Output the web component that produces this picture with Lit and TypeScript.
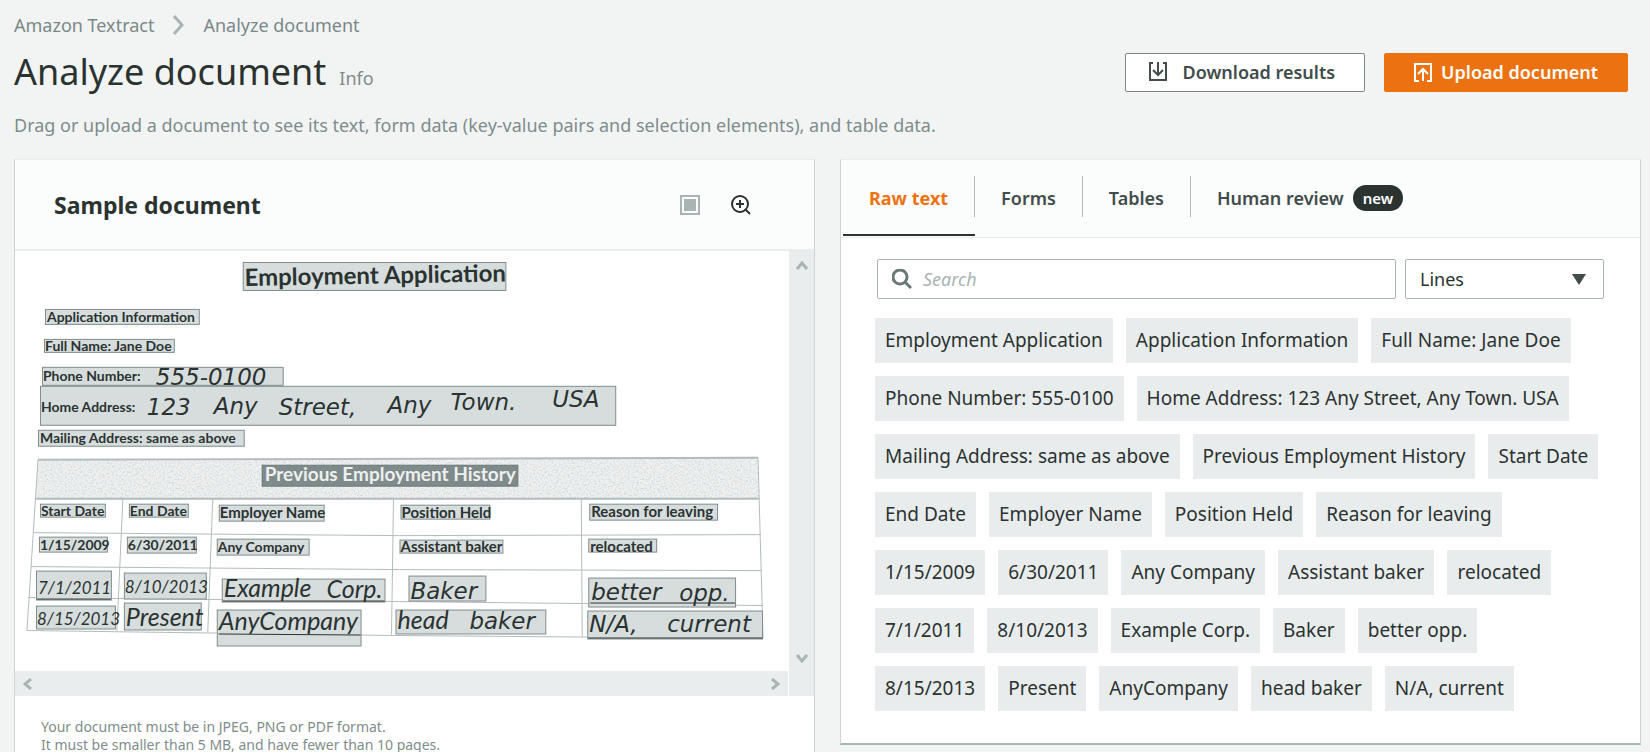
import { LitElement, html, svg, css } from "lit";
import { customElement, property, state } from "lit/decorators.js";
import { classMap } from "lit/directives/class-map.js";

type Word = { x: number; y: number; t: string; k: string; r?: number };
type Box = { x: number; y: number; w: number; h: number; dark?: boolean; words: Word[] };

const LINES = [
  ["Employment Application", "Application Information", "Full Name: Jane Doe"],
  ["Phone Number: 555-0100", "Home Address: 123 Any Street, Any Town. USA"],
  ["Mailing Address: same as above", "Previous Employment History", "Start Date"],
  ["End Date", "Employer Name", "Position Held", "Reason for leaving"],
  ["1/15/2009", "6/30/2011", "Any Company", "Assistant baker", "relocated"],
  ["7/1/2011", "8/10/2013", "Example Corp.", "Baker", "better opp."],
  ["8/15/2013", "Present", "AnyCompany", "head baker", "N/A, current"],
];

const box = (x: number, y: number, right: number, bottom: number, words: Word[], dark = false): Box =>
  ({ x, y, w: right - x, h: bottom - y, words, dark });
const word = (x: number, y: number, t: string, k: string, r = 0): Word => ({ x, y, t, k, r });

const BOXES: Box[] = [
  box(243, 261, 507, 290, [word(245, 285, "Employment Application", "heading", -1)]),
  box(45, 308, 200, 324, [word(47, 321, "Application Information", "label")]),
  box(44, 338, 175, 352, [word(45, 350, "Full Name: Jane Doe", "label")]),
  box(42, 366, 284, 385, [word(43, 380, "Phone Number:", "label"), word(156, 384, "555-0100", "hand wide")]),
  box(40, 385, 617, 425, [
    word(41, 411, "Home Address:", "label"), word(147, 414, "123", "hand wide"), word(214, 413, "Any", "hand wide"),
    word(279, 414, "Street,", "hand wide"), word(388, 412, "Any", "hand wide"), word(451, 409, "Town.", "hand wide"),
    word(553, 406, "USA", "hand wide"),
  ]),
  box(38, 429, 245, 446, [word(40, 442, "Mailing Address: same as above", "label")]),
  box(262, 464, 519, 486, [word(265, 480, "Previous Employment History", "banner")], true),
  box(40, 503, 106, 517, [word(41, 515, "Start Date", "cell")]),
  box(129, 503, 189, 517, [word(130, 515, "End Date", "cell")]),
  box(219, 504, 325, 521, [word(220, 517, "Employer Name", "cell large")]),
  box(401, 504, 491, 519, [word(402, 517, "Position Held", "cell large")]),
  box(590, 503, 719, 520, [word(592, 516, "Reason for leaving", "cell large")]),
  box(39, 536, 108, 552, [word(40, 549, "1/15/2009", "cell")]),
  box(127, 536, 197, 553, [word(128, 549, "6/30/2011", "cell")]),
  box(217, 538, 310, 555, [word(218, 551, "Any Company", "cell")]),
  box(400, 539, 504, 553, [word(401, 551, "Assistant baker", "cell large")]),
  box(589, 538, 658, 552, [word(591, 551, "relocated", "cell large")]),
  box(36, 570, 112, 600, [word(38, 593, "7/1/2011", "date")]),
  box(124, 572, 207, 599, [word(125, 592, "8/10/2013", "date")]),
  box(222, 578, 386, 602, [word(224, 596, "Example", "hand"), word(327, 597, "Corp.", "hand")]),
  box(409, 575, 487, 601, [word(411, 598, "Baker", "hand wide")]),
  box(589, 577, 737, 607, [word(592, 599, "better", "hand wide"), word(680, 600, "opp.", "hand wide")]),
  box(36, 605, 116, 629, [word(37, 624, "8/15/2013", "date")]),
  box(124, 602, 202, 630, [word(126, 626, "Present", "hand")]),
  box(217, 609, 362, 646, [word(219, 630, "AnyCompany", "hand")]),
  box(396, 609, 547, 634, [word(398, 629, "head", "hand"), word(470, 629, "baker", "hand wide")]),
  box(588, 610, 764, 639, [word(590, 632, "N/A,", "hand wide"), word(668, 632, "current", "hand wide")]),
];

@customElement("scanned-form")
class ScannedForm extends LitElement {
  static styles = css`
    :host { display: block; background: #fff; }
    .sheet { display: block; width: 100%; height: auto; }
    text { fill: #2b3331; font-family: Lato, "Noto Sans", sans-serif; font-weight: 700; }
    .heading { font-size: 24px; }
    .label { font-size: 14px; }
    .cell { font-size: 14px; }
    .cell.large { font-size: 15px; }
    .banner { font-size: 19px; fill: #eef0f0; }
    .hand, .date { font-weight: 400; font-style: italic; font-size: 25px; }
    .hand.wide { font-family: "DejaVu Sans", sans-serif; font-size: 23px; }
    .date { font-size: 17px; }
    .mark { fill: #d7dddd; stroke: #7f8c8d; stroke-width: 1; }
    .mark.dark { fill: #7f8a8a; stroke: #6c7878; }
    .rule { fill: none; stroke: #b3bcbc; stroke-width: 1; }
    .edge { fill: none; stroke: #b3bcbc; stroke-width: 2; }
    .band { fill: #f0f2f2; }
    .ink { fill: none; stroke: #2b3331; stroke-width: 1; }
  `;

  render() {
    return html`
      <svg class="sheet" viewBox="15 250 775 421" role="img" aria-label="Scanned employment application">
        <defs>
          <filter id="grain" x="0" y="0" width="1" height="1">
            <feTurbulence type="fractalNoise" baseFrequency="0.55" numOctaves="2" seed="4" />
            <feColorMatrix values="0 0 0 0 0.62  0 0 0 0 0.67  0 0 0 0 0.67  0 2.4 0 0 -1" />
            <feComposite in2="SourceGraphic" operator="in" result="dots" />
            <feMerge><feMergeNode in="SourceGraphic" /><feMergeNode in="dots" /></feMerge>
          </filter>
        </defs>
        <path class="band" filter="url(#grain)" d="M38 459 759 456 760 498 36 498Z" />
        <path class="edge" d="M38 459 759 457M36 498H760" />
        <path class="rule" d="M38 459 27 630M759 457 764 638M34 532 400 535 762 534M31 566 400 569 763 570M28 597 400 601 764 605M27 630 393 635 764 638M123 498 117 631M213 498 208 632M394 499 392 634M582 498 583 636" />
        ${BOXES.map((b) => svg`
          <rect class=${b.dark ? "mark dark" : "mark"} x=${b.x + 0.5} y=${b.y + 0.5} width=${b.w - 1} height=${b.h - 1} />
          ${b.words.map((w) => svg`<text class=${w.k} x=${w.x} y=${w.y} transform=${`rotate(${w.r} ${w.x} ${w.y})`}>${w.t}</text>`)}
        `)}
        <path class="ink" d="M37 598.500H111M223 600.500H385M591 602.500H736M219 633.500 361 634.500M589 637.500H763" />
      </svg>
    `;
  }
}

@customElement("text-chip")
class TextChip extends LitElement {
  static styles = css`
    :host { display: block; padding: 0 10px; background: #e9ecec; line-height: 45px; white-space: nowrap; }
  `;
  @property() label = "";
  render() { return html`${this.label}`; }
}

@customElement("app-root")
class AppRoot extends LitElement {
  static styles = css`
    :host {
      display: block; box-sizing: border-box; height: 100vh; overflow: hidden;
      padding: 13px 9px 0 14px; background: #f2f4f4; color: #2b3331;
      font-family: "Noto Sans", "Open Sans", sans-serif; font-size: 18px; line-height: 24px;
    }
    * { box-sizing: border-box; }
    h1, h2, p, ol { margin: 0; padding: 0; }
    button, input, select { font: inherit; color: inherit; margin: 0; }
    a { color: inherit; text-decoration: none; }
    svg { display: block; flex: none; }
    .crumbs { display: flex; align-items: center; gap: 19px; list-style: none; color: #7b8888; }
    .crumbs li { display: flex; align-items: center; gap: 19px; }
    .head { display: flex; align-items: center; justify-content: space-between; margin-top: 13px; padding-right: 13px; }
    .title { display: flex; align-items: baseline; gap: 13px; }
    .title h1 { font-size: 36px; line-height: 44px; font-weight: 400; }
    .muted { color: #7f8c8c; }
    .actions { display: flex; gap: 19px; }
    .btn {
      display: flex; align-items: center; justify-content: center; height: 39px;
      border: 1px solid #7b8888; border-radius: 2px; background: #fff; color: #414c4b; font-weight: 600; padding: 0 29px 0 22px; gap: 14px;
    }
    .btn.primary { background: #ec7211; border-color: #ec7211; color: #fff; padding: 0 29px 0 28px; gap: 8px; }
    .lead { margin-top: 19px; color: #7f8c8c; }
    .columns { display: grid; grid-template-columns: 1fr 1fr; gap: 25px; margin-top: 22px; align-items: start; }
    .panel { background: #fff; border: 1px solid #cdd4d4; border-top-color: #eaeded; border-bottom: 2px solid #aab7b8; min-width: 0; }
    .panel-head { display: flex; align-items: center; background: #fbfcfc; border-bottom: 2px solid #eaeded; }
    .doc-head { justify-content: space-between; height: 91px; padding: 0 63px 0 39px; }
    .doc-head h2 { font-size: 23px; line-height: 32px; font-weight: 700; }
    .tools { display: flex; gap: 31px; }
    .icon { display: flex; padding: 0; border: 0; background: none; color: #2b3331; }
    .icon.off { color: #aab4b4; }
    .viewer { display: grid; grid-template-columns: 1fr 25px; grid-template-rows: auto 25px; column-gap: 0; }
    .vbar, .hbar { display: flex; justify-content: space-between; align-items: center; background: #eaeded; color: #aab4b4; }
    .vbar { grid-row: 1 / 3; grid-column: 2; flex-direction: column; padding: 10px 0 33px; }
    .hbar { padding: 0 8px; border-right: 1px solid #fff; }
    .hint { padding: 22px 26px 12px; font-size: 14px; line-height: 18px; color: #7f8c8c; }
    .tabs { height: 78px; padding-left: 2px; align-items: stretch; border-bottom-width: 1px; }
    .tab {
      position: relative; display: flex; align-items: center; gap: 9px; padding: 2px 27px 0 26px; height: 76px;
      border: 0; border-bottom: 2px solid transparent; background: none; font-weight: 600; color: #414c4b;
    }
    .tab.on { color: #ec7211; border-bottom-color: #2b3331; font-weight: 700; }
    .tab:not(:last-child)::after { content: ""; position: absolute; right: 0; top: 16px; height: 41px; width: 1px; background: #b3bcbc; }
    .badge { padding: 0 10px; border-radius: 13px; background: #2b3331; color: #fff; font-size: 15px; line-height: 26px; }
    .filters { display: flex; gap: 9px; padding: 21px 36px 0 36px; }
    .field { display: flex; align-items: center; height: 40px; border: 1px solid #aab4b4; border-radius: 2px; background: #fff; }
    .search { flex: 1; gap: 11px; padding-left: 14px; color: #6c7878; min-width: 0; }
    .search input { flex: 1; min-width: 0; border: 0; outline: 0; padding: 0; background: none; }
    .search input::placeholder { color: #aab4b4; font-style: italic; opacity: 1; }
    .pick { display: grid; grid-template-columns: 1fr; width: 199px; }
    .pick select { grid-area: 1 / 1; appearance: none; border: 0; outline: 0; background: none; height: 38px; padding: 0 14px; }
    .pick svg { grid-area: 1 / 1; justify-self: end; margin-right: 17px; pointer-events: none; }
    .chips { display: grid; gap: 13px; padding: 19px 20px 32px 34px; font-size: 19px; }
    .chip-row { display: flex; flex-wrap: wrap; gap: 13px; }
  `;

  @state() tab = "Raw text";

  private chevron(d: string, w: number, h: number) {
    return html`<svg width=${w} height=${h} viewBox="0 0 ${w} ${h}" fill="none" stroke="currentColor" stroke-width="3"><path d=${d} /></svg>`;
  }

  render() {
    return html`
      <nav aria-label="Breadcrumb">
        <ol class="crumbs">
          <li><a href="#">Amazon Textract</a>
            <svg width="11" height="20" viewBox="0 0 11 20" fill="none" stroke="#aab4b4" stroke-width="3"><path d="M1 1 9 10 1 19" /></svg>
          </li>
          <li>Analyze document</li>
        </ol>
      </nav>
      <header class="head">
        <div class="title"><h1>Analyze document</h1><a class="muted" href="#">Info</a></div>
        <div class="actions">
          <button class="btn">
            <svg width="20" height="20" viewBox="0 0 20 20" fill="none" stroke="currentColor" stroke-width="2"><path d="M5 1H2V18H18V1H15M10 0V13M5 8 10 13 15 8" /></svg>
            Download results
          </button>
          <button class="btn primary">
            <svg width="20" height="20" viewBox="0 0 20 20" fill="none" stroke="currentColor" stroke-width="2"><path d="M6 19H2V2H18V19H14M10 19V7M5 12 10 7 15 12" /></svg>
            Upload document
          </button>
        </div>
      </header>
      <p class="lead">Drag or upload a document to see its text, form data (key-value pairs and selection elements), and table data.</p>

      <main class="columns">
        <section class="panel">
          <div class="panel-head doc-head">
            <h2>Sample document</h2>
            <div class="tools">
              <button class="icon off" aria-label="Fit to window">
                <svg width="20" height="20" viewBox="0 0 20 20"><rect x="1" y="1" width="18" height="18" fill="none" stroke="currentColor" stroke-width="2" /><rect x="4" y="4" width="12" height="12" fill="currentColor" /></svg>
              </button>
              <button class="icon" aria-label="Zoom in">
                <svg width="20" height="20" viewBox="0 0 20 20" fill="none" stroke="currentColor" stroke-width="2"><circle cx="9" cy="9" r="8" /><path d="M14 14 19 19M9 5V13M5 9H13" /></svg>
              </button>
            </div>
          </div>
          <div class="viewer">
            <scanned-form></scanned-form>
            <div class="vbar">
              <button class="icon off" aria-label="Scroll up">${this.chevron("M1 8 6 2 11 8", 12, 9)}</button>
              <button class="icon off" aria-label="Scroll down">${this.chevron("M1 1 6 7 11 1", 12, 9)}</button>
            </div>
            <div class="hbar">
              <button class="icon off" aria-label="Scroll left">${this.chevron("M8 1 2 6 8 11", 9, 12)}</button>
              <button class="icon off" aria-label="Scroll right">${this.chevron("M1 1 7 6 1 11", 9, 12)}</button>
            </div>
          </div>
          <p class="hint">Your document must be in JPEG, PNG or PDF format.<br />It must be smaller than 5 MB, and have fewer than 10 pages.</p>
        </section>

        <section class="panel">
          <div class="panel-head tabs" role="tablist">
            ${["Raw text", "Forms", "Tables", "Human review"].map((t) => html`
              <button role="tab" aria-selected=${this.tab === t ? "true" : "false"}
                class=${classMap({ tab: true, on: this.tab === t })} @click=${() => (this.tab = t)}>
                ${t}${t === "Human review" ? html`<span class="badge">new</span>` : ""}
              </button>`)}
          </div>
          <div class="filters">
            <label class="field search">
              <svg width="20" height="20" viewBox="0 0 20 20" fill="none" stroke="currentColor" stroke-width="3"><circle cx="8" cy="8" r="7" /><path d="M13 13 19 19" /></svg>
              <input type="search" placeholder="Search" aria-label="Search" />
            </label>
            <div class="field pick">
              <select aria-label="Group text by"><option>Lines</option><option>Words</option></select>
              <svg width="14" height="11" viewBox="0 0 14 11"><path d="M0 0H14L7 11Z" fill="#414c4b" /></svg>
            </div>
          </div>
          <div class="chips">
            ${LINES.map((row) => html`<div class="chip-row">${row.map((l) => html`<text-chip .label=${l}></text-chip>`)}</div>`)}
          </div>
        </section>
      </main>
    `;
  }
}
